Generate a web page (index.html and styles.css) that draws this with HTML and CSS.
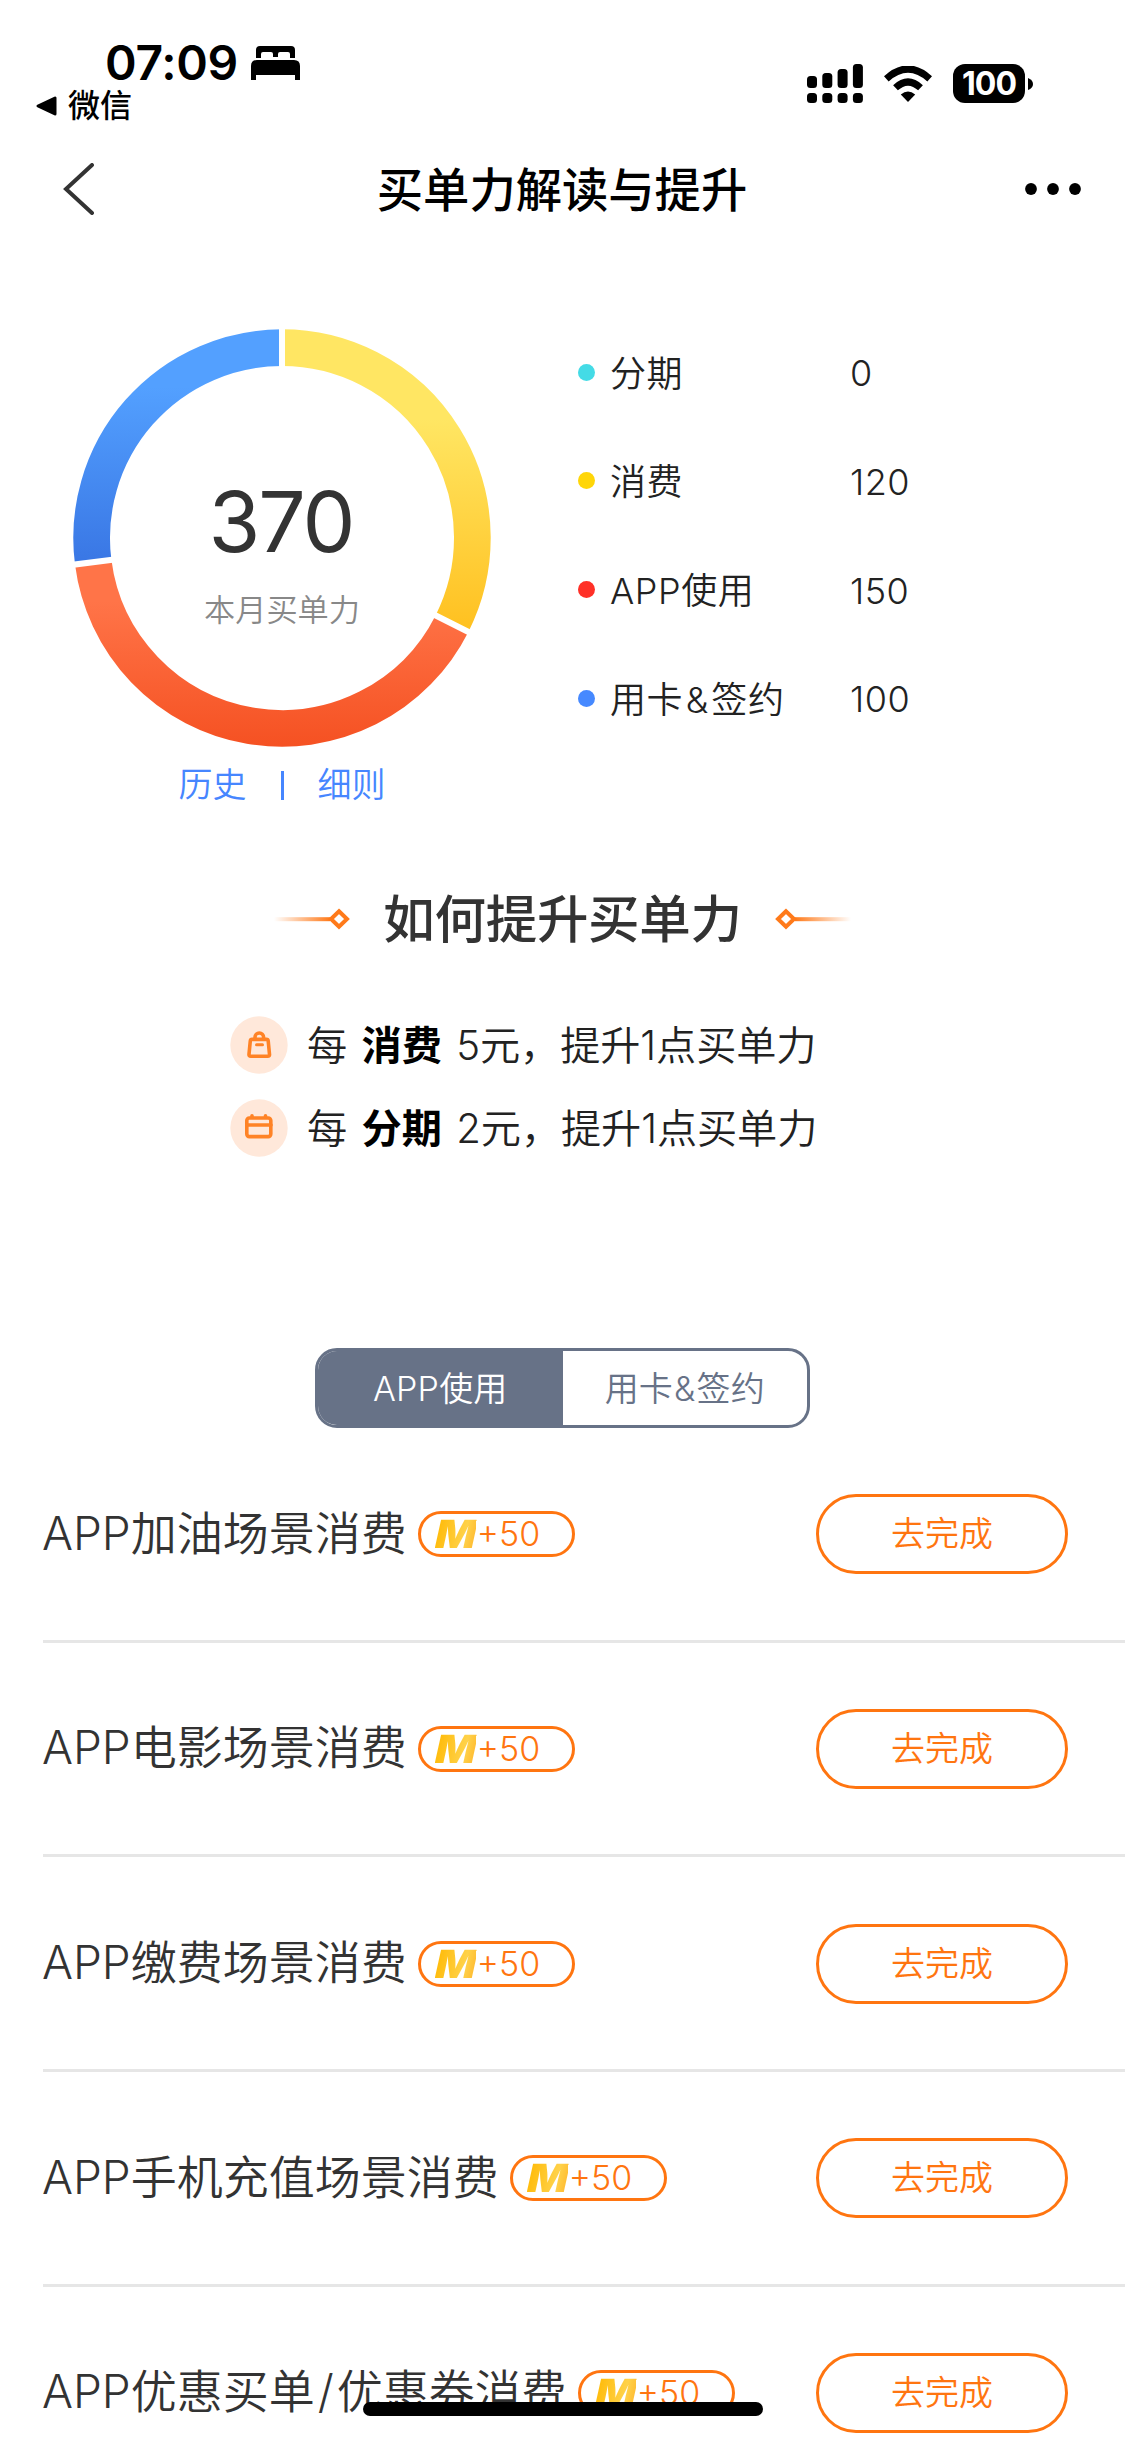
FILE: index.html
```html
<!DOCTYPE html>
<html lang="zh-CN">
<head>
<meta charset="utf-8">
<title>买单力解读与提升</title>
<link rel="stylesheet" href="styles.css">
</head>
<body>
<div class="screen">
  <header class="status">
    <div class="status-left">
      <div class="clock">
        <span class="time">07:09</span>
        <svg class="bed" width="50" height="34" viewBox="0 0 50 34"><path d="M5 12V4a4 4 0 0 1 4-4h31a4 4 0 0 1 4 4v8h-5V8q0-2-2-2h-8q-2 0-2 2v3h-5V8q0-2-2-2h-8q-2 0-2 2v4z"/><path d="M0 34V20q0-6 6-6h37q6 0 6 6v14h-5v-5H5v5z"/></svg>
      </div>
      <div class="return">
        <svg width="21" height="20" viewBox="0 0 21 20"><path d="M2 10 19 2v16z" stroke="#000" stroke-width="3" stroke-linejoin="round"/></svg>
        <span>微信</span>
      </div>
    </div>
    <div class="status-right">
      <svg width="56" height="39" viewBox="0 0 56 39">
        <rect x="0" y="12" width="10" height="12" rx="3.5"/><rect x="15.3" y="9" width="10" height="15" rx="3.5"/><rect x="30.6" y="5" width="10" height="19" rx="3.5"/><rect x="45.9" y="0" width="10" height="24" rx="3.5"/>
        <rect x="0" y="29" width="10" height="10" rx="3.5"/><rect x="15.3" y="29" width="10" height="10" rx="3.5"/><rect x="30.6" y="29" width="10" height="10" rx="3.5"/><rect x="45.9" y="29" width="10" height="10" rx="3.5"/>
      </svg>
      <svg class="wifi" width="48" height="36" viewBox="0 0 48 36"><path d="M24 36 16.800 28.500Q24 22.500 31.200 28.500z"/><path d="M11.500 21.800Q24 10.200 36.500 21.800" fill="none" stroke="#000" stroke-width="7"/><path d="M2.300 12.800Q24-6.800 45.700 12.800" fill="none" stroke="#000" stroke-width="7"/></svg>
      <span class="battery">100</span>
      <svg class="nub" width="5" height="12" viewBox="0 0 5 12"><path d="M0 0q5 2 5 6t-5 6z"/></svg>
    </div>
  </header>

  <nav class="navbar">
    <svg width="32" height="52" viewBox="0 0 32 52"><path d="M29 2 3 26l26 24" fill="none" stroke="#333" stroke-width="4" stroke-linecap="round"/></svg>
    <h1>买单力解读与提升</h1>
    <svg width="56" height="12" viewBox="0 0 56 12"><circle cx="6" cy="6" r="5.900"/><circle cx="28" cy="6" r="5.900"/><circle cx="50" cy="6" r="5.900"/></svg>
  </nav>

  <section class="summary">
    <div class="chart-col">
      <div class="donut">
        <svg width="420" height="420" viewBox="0 0 420 420">
          <defs>
            <linearGradient id="yellow" gradientUnits="userSpaceOnUse" x1="0" y1="0" x2="0" y2="305"><stop offset=".3" stop-color="#ffe663"/><stop offset="1" stop-color="#ffc01f"/></linearGradient>
            <linearGradient id="blue" gradientUnits="userSpaceOnUse" x1="0" y1="0" x2="0" y2="237"><stop offset=".25" stop-color="#53a0ff"/><stop offset="1" stop-color="#3976e4"/></linearGradient>
            <linearGradient id="red" gradientUnits="userSpaceOnUse" x1="0" y1="237" x2="0" y2="419"><stop offset=".2" stop-color="#ff7448"/><stop offset="1" stop-color="#f55122"/></linearGradient>
          </defs>
          <g fill="none" stroke-width="36.700">
            <path d="M210 19.650A190.350 190.350 0 0 1 379.970 295.700" stroke="url(#yellow)"/>
            <path d="M379.970 295.700A190.350 190.350 0 0 1 21.190 234.180" stroke="url(#red)"/>
            <path d="M21.190 234.180A190.350 190.350 0 0 1 210 19.650" stroke="url(#blue)"/>
          </g>
          <path d="M210 45V-5M357.300 284.300 402 306.800M46.300 231-3.300 237.300" stroke="#fff" stroke-width="6"/>
        </svg>
        <div class="donut-label"><strong>370</strong><span>本月买单力</span></div>
      </div>
      <div class="links"><a>历史</a><i></i><a>细则</a></div>
    </div>
    <ul class="legend">
      <li><i class="dot cyan"></i><span>分期</span><b>0</b></li>
      <li><i class="dot gold"></i><span>消费</span><b>120</b></li>
      <li><i class="dot crimson"></i><span>APP使用</span><b>150</b></li>
      <li><i class="dot azure"></i><span>用卡<u>&amp;</u>签约</span><b>100</b></li>
    </ul>
  </section>

  <section class="howto">
    <div class="howto-title">
      <svg width="78" height="24" viewBox="0 0 78 24"><defs><linearGradient id="fade"><stop offset="0" stop-color="#ff7a1a" stop-opacity="0"/><stop offset="1" stop-color="#ff7a1a"/></linearGradient></defs><rect y="10.200" width="56" height="4" fill="url(#fade)"/><path d="M65 4.200 73 12l-8 7.800L57 12z" fill="#fff" stroke="#ff7a1a" stroke-width="4"/></svg>
      <h2>如何提升买单力</h2>
      <svg class="flip" width="78" height="24" viewBox="0 0 78 24"><rect y="10.200" width="56" height="4" fill="url(#fade)"/><path d="M65 4.200 73 12l-8 7.800L57 12z" fill="#fff" stroke="#ff7a1a" stroke-width="4"/></svg>
    </div>
    <div class="tip">
      <svg width="58" height="58" viewBox="0 0 58 58"><circle cx="29" cy="29" r="28.700" fill="#ffe8da"/><g fill="none" stroke="#ff8326" stroke-width="3.600" stroke-linejoin="round" stroke-linecap="round"><path d="M22 23.400h14.500q1.500 0 1.700 1.500l1.300 13.400q.2 2-1.800 2H20.800q-2 0-1.800-2l1.300-13.400q.2-1.500 1.700-1.500z"/><path d="M25 22.500v-1.200a4.300 4.300 0 0 1 8.600 0v1.200"/><path d="M26.500 28.700h6" stroke-width="3"/></g></svg>
      <p>每<b>消费</b>5元，提升1点买单力</p>
    </div>
    <div class="tip">
      <svg width="58" height="58" viewBox="0 0 58 58"><circle cx="29" cy="29" r="28.700" fill="#ffe8da"/><g fill="none" stroke="#ff8326" stroke-width="3.600" stroke-linejoin="round" stroke-linecap="round"><rect x="16.800" y="19" width="24" height="18.600" rx="2.500"/><path d="M17 26h24M22 16.800v1.500M35.500 16.800v1.500"/></g></svg>
      <p>每<b>分期</b>2元，提升1点买单力</p>
    </div>
  </section>

  <div class="tabs"><span class="tab active">APP使用</span><span class="tab">用卡<u>&amp;</u>签约</span></div>

  <ul class="tasks">
    <li><span class="name">APP加油场景消费</span><span class="points"><em>M</em>+50</span><button>去完成</button></li>
    <li><span class="name">APP电影场景消费</span><span class="points"><em>M</em>+50</span><button>去完成</button></li>
    <li><span class="name">APP缴费场景消费</span><span class="points"><em>M</em>+50</span><button>去完成</button></li>
    <li><span class="name">APP手机充值场景消费</span><span class="points"><em>M</em>+50</span><button>去完成</button></li>
    <li><span class="name">APP优惠买单<s>/</s>优惠券消费</span><span class="points"><em>M</em>+50</span><button>去完成</button></li>
  </ul>
  <div class="home-bar"></div>
</div>
</body>
</html>
```
FILE: styles.css
```css
* { box-sizing: border-box; margin: 0; padding: 0; }
body { background: #fff; }
.screen {
  position: relative;
  width: 1125px;
  height: 2439px;
  overflow: hidden;
  font-family: Inter, "Noto Sans CJK SC", sans-serif;
  font-weight: 350;
  color: #222;
}
svg { display: block; flex: none; }
ul { list-style: none; }
u, s { text-decoration: none; }

.status { display: flex; justify-content: space-between; height: 132px; padding: 37px 92px 0 36px; color: #000; }
.clock { display: flex; align-items: center; height: 51px; padding-left: 69px; }
.time { width: 146px; font-size: 48px; font-weight: 600; line-height: 51px; letter-spacing: -0.3px; }
.return { display: flex; align-items: center; gap: 11px; height: 36px; font-size: 32px; font-weight: 500; line-height: 36px; }
.status-right { display: flex; align-items: center; height: 39px; margin-top: 27px; }
.wifi { margin: 0 21px; }
.battery { width: 72px; height: 39px; border-radius: 12px; background: #000; color: #fff; font-size: 32px; font-weight: 700; line-height: 39px; text-align: center; letter-spacing: -1px; }
.nub { margin-left: 3px; }

.navbar { display: flex; align-items: center; justify-content: space-between; height: 114px; padding: 0 44px 0 63px; color: #000; }
.navbar h1 { padding: 2px 0 0 4px; font-size: 46.3px; font-weight: 500; line-height: 60px; }

.summary { display: flex; height: 600px; padding: 82px 0 0 72px; }
.chart-col { width: 420px; }
.donut { display: grid; }
.donut > * { grid-area: 1 / 1; }
.donut-label { display: flex; flex-direction: column; align-items: center; padding-top: 144px; }
.donut-label strong { margin-right: 2px; font-size: 84px; font-weight: 400; line-height: 100px; letter-spacing: -2px; color: #333; }
.donut-label span { margin-top: 18px; font-size: 31.2px; line-height: 40px; color: #888; }
.links { display: flex; align-items: center; justify-content: center; height: 40px; margin-top: 17px; font-size: 34px; line-height: 40px; color: #4686ff; }
.links i { width: 3px; height: 29px; margin: 0 34px; background: #4686ff; }
.legend { margin: -10px 0 0 86px; }
.legend li { display: flex; align-items: center; height: 108.67px; font-size: 36px; line-height: 50px; }
.dot { width: 17px; height: 17px; margin-right: 15px; border-radius: 50%; }
.legend span { width: 240px; padding-top: 3px; letter-spacing: .6px; }
.legend b { padding-top: 2px; font-weight: 350; letter-spacing: .5px; }
.legend u { margin: 0 2.5px; }
.cyan { background: #44dbe6; }
.gold { background: #ffd608; }
.crimson { background: #ff3027; }
.azure { background: #4689ff; }

.howto { height: 502px; padding-top: 42px; }
.howto-title { display: flex; align-items: center; justify-content: center; gap: 31px; height: 62px; }
.howto-title h2 { font-size: 51.5px; font-weight: 500; line-height: 62px; letter-spacing: -.3px; color: #333; }
.flip { transform: scaleX(-1); }
.tip { display: flex; align-items: center; gap: 19px; height: 58px; padding-left: 230px; margin-bottom: 25px; font-size: 40.2px; line-height: 58px; }
.tip p { padding-top: 2px; letter-spacing: -.1px; }
.howto-title + .tip { margin-top: 66px; }
.tip b { margin: 0 14.5px; font-weight: 700; color: #000; }

.tabs { display: grid; grid-template-columns: 1fr 1fr; width: 495px; height: 80px; margin: 0 auto; border: 3px solid #677287; border-radius: 22px; overflow: hidden; font-size: 34px; line-height: 75px; text-align: center; color: #677287; }
.tab { letter-spacing: .2px; }
.tab u { margin: 0 1px; }
.active { background: #677287; color: #fff; }

.tasks { padding-left: 43px; }
.tasks li { display: flex; align-items: center; height: 214.67px; padding: 1px 57px 0 0; border-bottom: 3px solid #e6e6e6; }
.name { margin: -3px 0 0 -1px; font-size: 46px; line-height: 60px; color: #333; }
.name s { margin: 0 3px; }
.points { display: flex; align-items: center; width: 157px; height: 46px; margin-left: 11px; padding-left: 14px; border: 3px solid #ff7510; border-radius: 23px; font-size: 34px; line-height: 40px; color: #ff7510; }
.points em { width: 37px; margin-right: 5px; font-size: 39px; font-weight: 900; background: linear-gradient(100deg, #ffb800, #ffd24a 70%, #ffb52a); -webkit-background-clip: text; background-clip: text; color: transparent; transform: scaleX(1.1) skewX(-2deg); transform-origin: 0 70%; }
.tasks button { width: 252px; height: 80px; margin-left: auto; border: 3px solid #ff7510; border-radius: 40px; background: none; font: inherit; font-size: 34px; line-height: 40px; color: #ff7510; }
.home-bar { position: absolute; left: 363px; bottom: 23px; width: 400px; height: 14px; border-radius: 7px; background: #000; }
```
